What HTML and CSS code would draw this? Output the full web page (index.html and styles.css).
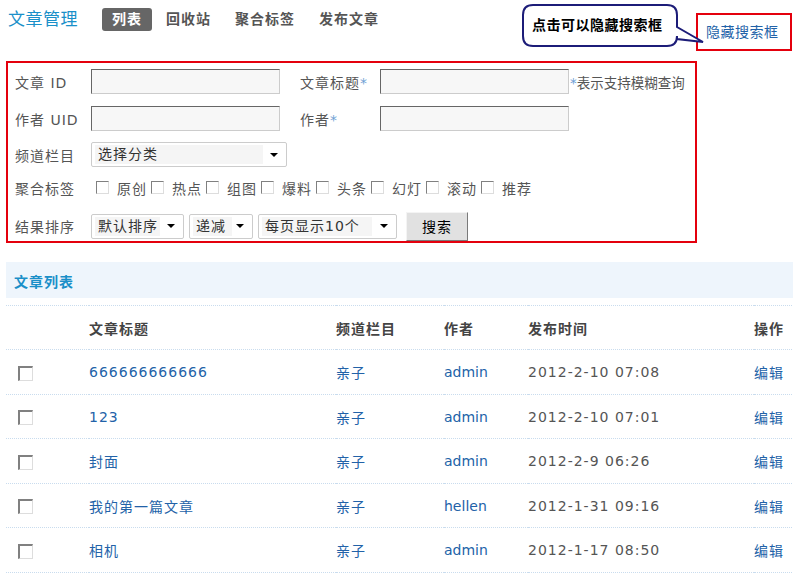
FILE: index.html
```html
<!DOCTYPE html>
<html lang="zh-CN">
<head>
  <meta charset="UTF-8" />
  <title>文章管理</title>
  <link rel="stylesheet" href="styles.css">
</head>
<body>
  <div class="top">
    <h1 class="page-title">文章管理</h1>
    <div class="tabs">
      <a class="tab active">列表</a>
      <a class="tab">回收站</a>
      <a class="tab">聚合标签</a>
      <a class="tab">发布文章</a>
    </div>
    <a class="hide-link">隐藏搜索框</a>

    <div class="callout">
      <svg class="callout-shape" width="190" height="50" viewBox="0 0 190 50">
        <path d="M18,5 H152 Q162,5 162,15 V27 L188,42 L162,39 V36 Q162,46 152,46 H18 Q8,46 8,36 V15 Q8,5 18,5 Z" fill="#fff" stroke="#1c1c78" stroke-width="2"/>
      </svg>
      <span class="callout-text">点击可以隐藏搜索框</span>
    </div>
  </div>

  <div class="search-box">
    <div class="row">
      <label class="lbl">文章&nbsp;ID</label>
      <span class="txt"></span>
      <label class="lbl lbl-2">文章标题<i>*</i></label>
      <span class="txt"></span>
      <span class="hint"><i>*</i>表示支持模糊查询</span>
    </div>
    <div class="row">
      <label class="lbl">作者&nbsp;UID</label>
      <span class="txt"></span>
      <label class="lbl lbl-2">作者<i>*</i></label>
      <span class="txt"></span>
    </div>
    <div class="row row-3">
      <label class="lbl">频道栏目</label>
      <span class="sel sel-cat"><span class="sel-val">选择分类</span><b class="arrow"></b></span>
    </div>
    <div class="row row-4">
      <label class="lbl">聚合标签</label>
      <div class="checks">
        <span class="chk-item"><span class="chk"></span>原创</span>
        <span class="chk-item"><span class="chk"></span>热点</span>
        <span class="chk-item"><span class="chk"></span>组图</span>
        <span class="chk-item"><span class="chk"></span>爆料</span>
        <span class="chk-item"><span class="chk"></span>头条</span>
        <span class="chk-item"><span class="chk"></span>幻灯</span>
        <span class="chk-item"><span class="chk"></span>滚动</span>
        <span class="chk-item"><span class="chk"></span>推荐</span>
      </div>
    </div>
    <div class="row row-5">
      <label class="lbl">结果排序</label>
      <span class="sel sel-order"><span class="sel-val">默认排序</span><b class="arrow"></b></span>
      <span class="sel sel-dir"><span class="sel-val">递减</span><b class="arrow"></b></span>
      <span class="sel sel-page"><span class="sel-val">每页显示10个</span><b class="arrow"></b></span>
      <button class="btn">搜索</button>
    </div>
  </div>

  <div class="list-head">文章列表</div>

  <table class="list">
    <colgroup>
      <col class="c-chk"><col class="c-title"><col class="c-cat"><col class="c-author"><col class="c-date"><col class="c-op">
    </colgroup>
    <thead>
      <tr><th></th><th>文章标题</th><th>频道栏目</th><th>作者</th><th>发布时间</th><th>操作</th></tr>
    </thead>
    <tbody>
      <tr><td><span class="box"></span></td><td><a>666666666666</a></td><td><a>亲子</a></td><td><a class="author">admin</a></td><td class="date">2012-2-10 07:08</td><td><a>编辑</a></td></tr>
      <tr><td><span class="box"></span></td><td><a>123</a></td><td><a>亲子</a></td><td><a class="author">admin</a></td><td class="date">2012-2-10 07:01</td><td><a>编辑</a></td></tr>
      <tr><td><span class="box"></span></td><td><a>封面</a></td><td><a>亲子</a></td><td><a class="author">admin</a></td><td class="date">2012-2-9 06:26</td><td><a>编辑</a></td></tr>
      <tr><td><span class="box"></span></td><td><a>我的第一篇文章</a></td><td><a>亲子</a></td><td><a class="author">hellen</a></td><td class="date">2012-1-31 09:16</td><td><a>编辑</a></td></tr>
      <tr><td><span class="box"></span></td><td><a>相机</a></td><td><a>亲子</a></td><td><a class="author">admin</a></td><td class="date">2012-1-17 08:50</td><td><a>编辑</a></td></tr>
    </tbody>
  </table>
</body>
</html>
```

FILE: styles.css
```css
/* Page */
body {
  margin: 0;
  overflow: hidden;
  font-family: "DejaVu Sans", "Noto Sans CJK SC", sans-serif;
  font-size: 14px;
  letter-spacing: 1px;
  color: #555;
  background: #fff;
}
a {
  color: #2262a8;
  text-decoration: none;
}
i {
  font-style: normal;
  color: #6f9fd4;
}

/* Top bar */
.top {
  position: relative;
  display: flex;
  align-items: flex-start;
  height: 61px;
  padding-left: 8px;
}
.page-title {
  margin: 8px 0 0;
  font-size: 17px;
  line-height: 23px;
  font-weight: normal;
  color: #1a90c9;
  letter-spacing: 0.5px;
}
.tabs {
  display: flex;
  margin: 8px 0 0 24px;
}
.tab {
  padding: 0 10px;
  margin-right: 4px;
  line-height: 23px;
  font-size: 14px;
  font-weight: bold;
  color: #555;
  border-radius: 3px;
}
.tab.active {
  background: #666;
  color: #fff;
}
.hide-link {
  margin: 13px 1px 0 auto;
  width: 84px;
  height: 34px;
  line-height: 34px;
  padding-left: 8px;
  box-sizing: content-box;
  border: 2px solid #e4000d;
  white-space: nowrap;
  letter-spacing: 0.5px;
}

/* Callout that points at the hide link */
.callout {
  position: absolute;
  left: 515px;
  top: 0;
  width: 190px;
  height: 50px;
}
.callout-shape {
  display: block;
}
.callout-text {
  position: absolute;
  left: 17px;
  top: 15px;
  line-height: 20px;
  font-weight: bold;
  color: #000;
  letter-spacing: 0.5px;
  white-space: nowrap;
}

/* Search form */
.search-box {
  margin-left: 6px;
  width: 680px;
  height: 172px;
  border: 2px solid #e4000d;
  padding: 6px 0 0 7px;
  box-sizing: content-box;
  overflow: hidden;
}
.row {
  display: flex;
  align-items: center;
  height: 25px;
  margin-bottom: 12px;
  white-space: nowrap;
}
.row-3 {
  margin-top: -1px;
  margin-bottom: 8px;
}
.row-4 {
  height: 25px;
  margin-bottom: 12px;
}
.row-5 {
  height: 28px;
  margin-bottom: 0;
}
.lbl {
  width: 76px;
  flex: none;
}
.lbl-2 {
  width: 80px;
  margin-left: 20px;
}
.txt {
  width: 187px;
  height: 23px;
  flex: none;
  background: #f7f7f7;
  border: 1px solid #ccc;
  border-top-color: #666;
  border-left-color: #666;
}
.hint {
  margin-left: 1px;
  font-size: 13.5px;
  letter-spacing: 0;
}

/* Fake selects */
.sel {
  display: flex;
  align-items: center;
  justify-content: space-between;
  height: 23px;
  padding: 0 8px 0 3px;
  margin-right: 5px;
  background: #fff;
  border: 1px solid #ccc;
  border-radius: 2px;
  flex: none;
  box-sizing: content-box;
}
.sel-val {
  height: 19px;
  line-height: 19px;
  padding-left: 3px;
  background: #f5f5f5;
  color: #333;
  overflow: hidden;
}
.arrow {
  width: 0;
  height: 0;
  border-left: 4px solid transparent;
  border-right: 4px solid transparent;
  border-top: 4px solid #000;
}
.sel-cat { width: 183px; }
.sel-cat .sel-val { width: 165px; }
.sel-order { width: 80px; }
.sel-order .sel-val { width: 62px; }
.sel-dir { width: 51px; }
.sel-dir .sel-val { width: 36px; }
.sel-page { width: 126px; }
.sel-page .sel-val { width: 107px; }

.btn {
  width: 62px;
  height: 29px;
  margin-left: 4px;
  padding: 0;
  font-family: inherit;
  font-size: 14px;
  letter-spacing: 1px;
  color: #000;
  background: #e1e1e1;
  border: 1px solid #7a7a7a;
  border-top-color: #f4f4f4;
  border-left-color: #f4f4f4;
}

/* Tag checkboxes */
.checks {
  display: flex;
  margin-left: 5px;
}
.chk-item {
  display: flex;
  align-items: center;
  margin-right: 4px;
}
.chk,
.box {
  display: inline-block;
  width: 11px;
  height: 11px;
  background: #fff;
  border: 1px solid #ddd;
  border-top-color: #808080;
  border-left-color: #808080;
}
.chk {
  margin-right: 8px;
}

/* Article list */
.list-head {
  margin: 19px 0 0 6px;
  height: 36px;
  line-height: 41px;
  padding-left: 8px;
  background: #eef5fc;
  color: #1a8fc8;
  font-weight: bold;
}
.list {
  margin: 7px 0 0 6px;
  width: 800px;
  border-collapse: collapse;
  table-layout: fixed;
  border-top: 1px dotted #c9dcee;
}
.c-chk { width: 83px; }
.c-title { width: 247px; }
.c-cat { width: 108px; }
.c-author { width: 84px; }
.c-date { width: 226px; }
.c-op { width: 52px; }
.list th,
.list td {
  height: 42.5px;
  padding: 1px 0 0;
  text-align: left;
  border-bottom: 1px dotted #c9dcee;
  white-space: nowrap;
}
.list th {
  height: 43px;
  padding: 0;
  color: #444;
  font-weight: bold;
}
.list td:first-child {
  padding-left: 12px;
}
.box {
  vertical-align: middle;
  width: 12px;
  height: 12px;
  border-width: 2px 1px 1px 2px;
}
.author {
  letter-spacing: 0;
}
.date {
  color: #555;
}
```
